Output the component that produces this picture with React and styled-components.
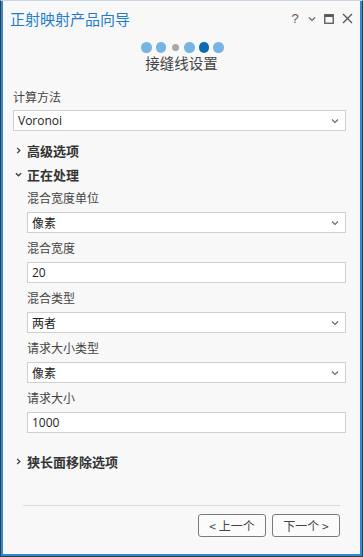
import React from 'react'
import styled, { createGlobalStyle } from 'styled-components'

const GlobalStyle = createGlobalStyle`
  html, body {
    margin: 0;
    padding: 0;
    background: #ffffff;
  }
  body {
    font-family: "Noto Sans", "Noto Sans CJK SC", sans-serif;
  }
`

const Frame = styled.div`
  box-sizing: border-box;
  width: 363px;
  height: 557px;
  border: 1px solid #3c3c3c;
  border-top-color: #c9d6e2;
`

const Window = styled.div`
  box-sizing: border-box;
  height: 100%;
  display: flex;
  flex-direction: column;
  background: #f8f8f8;
  border: 2px solid #2d8ad8;
  border-top: none;
`

const TitleBar = styled.div`
  height: 35px;
  display: flex;
  align-items: center;
  padding: 0 7px 0 7px;
`

const Title = styled.div`
  flex: 1;
  color: #1f7dcb;
  font-size: 15px;
  font-family: "Noto Sans CJK SC", sans-serif;
`

const WinButtons = styled.div`
  display: flex;
  align-items: center;
  gap: 8px;
  color: #555;
`

const Help = styled.span`
  font-family: "Liberation Sans", sans-serif;
  font-size: 13px;
  color: #555;
  width: 10px;
  text-align: center;
`

const Stepper = styled.div`
  display: flex;
  justify-content: center;
  align-items: center;
  gap: 4px;
  padding-top: 6px;
  height: 11px;
  padding-left: 2px;
`

const Dot = styled.span`
  width: ${p => (p.$small ? 7 : 10.5)}px;
  height: ${p => (p.$small ? 7 : 10.5)}px;
  margin: 0 ${p => (p.$small ? 1.5 : 0)}px;
  border-radius: 50%;
  background: ${p => (p.$active ? '#0b6cb4' : p.$small ? '#a8a8a8' : '#76b5e3')};
`

const Subtitle = styled.div`
  text-align: center;
  font-family: "Noto Sans CJK SC", sans-serif;
  font-size: 14.5px;
  line-height: 18px;
  color: #444;
  margin-top: 1px;
`

const Content = styled.div`
  padding: 17px 14px 0 10px;
`

const Group = styled.div`
  margin-left: ${p => (p.$indent ? 14 : 0)}px;
  margin-bottom: 7px;
`

const Label = styled.div`
  font-family: "Noto Sans CJK SC", sans-serif;
  font-size: 12px;
  line-height: 16px;
  color: #444;
  margin-bottom: ${p => (p.$tight ? 5 : 6)}px;
`

const Field = styled.div`
  box-sizing: border-box;
  height: 21px;
  display: flex;
  align-items: center;
  justify-content: space-between;
  padding: 0 6px 0 4px;
  background: #ffffff;
  border: 1px solid #cfcfcf;
  font-family: "Open Sans", "Noto Sans CJK SC", sans-serif;
  font-size: 12px;
  color: #222;
`

const Expander = styled.div`
  height: 24px;
  display: flex;
  align-items: center;
  gap: 5px;
  padding-left: 2px;
  margin-top: ${p => p.$top || 0}px;
  font-family: "Noto Sans CJK SC", sans-serif;
  font-weight: 700;
  font-size: 13px;
  color: #333;
`

const Spacer = styled.div`
  height: ${p => p.$h}px;
`

const Footer = styled.div`
  margin-top: auto;
  padding: 0 20px 17px 20px;
`

const Divider = styled.div`
  height: 1px;
  background: #dadada;
  margin-bottom: 8px;
`

const ButtonRow = styled.div`
  display: flex;
  justify-content: flex-end;
  gap: 6px;
`

const NavButton = styled.button`
  box-sizing: border-box;
  width: 68px;
  height: 23px;
  padding: 0;
  border: 1px solid #7a7a7a;
  border-radius: 3px;
  background: #fbfbfb;
  color: #444;
  font-family: "Noto Sans CJK SC", sans-serif;
  font-size: 12px;
`

const Chevron = ({ dir = 'down', size = 8, color = '#555', width = 1.3 }) => (
  <svg width={size} height={size} viewBox="0 0 8 8">
    {dir === 'down' ? (
      <path d="M1 2.5 L4 5.5 L7 2.5" fill="none" stroke={color} strokeWidth={width} />
    ) : (
      <path d="M2.5 1 L5.5 4 L2.5 7" fill="none" stroke={color} strokeWidth={width} />
    )}
  </svg>
)

const Select = ({ value }) => (
  <Field>
    <span>{value}</span>
    <Chevron size={8} color="#666" width={1.1} />
  </Field>
)

const FormGroup = ({ label, indent, tight, children }) => (
  <Group $indent={indent}>
    <Label $tight={tight}>{label}</Label>
    {children}
  </Group>
)

export default function App() {
  return (
    <>
      <GlobalStyle />
      <Frame>
        <Window>
          <TitleBar>
            <Title>正射映射产品向导</Title>
            <WinButtons>
              <Help>?</Help>
              <Chevron size={8} color="#666" width={1.2} />
              <svg width="10" height="10" viewBox="0 0 10 10">
                <rect x="0.75" y="0.75" width="8.5" height="8.5" fill="none" stroke="#555" strokeWidth="1.3" />
                <rect x="0.75" y="0.75" width="8.5" height="2.2" fill="#555" />
              </svg>
              <svg width="11" height="11" viewBox="0 0 11 11">
                <path d="M1 1 L10 10 M10 1 L1 10" stroke="#555" strokeWidth="1.3" />
              </svg>
            </WinButtons>
          </TitleBar>

          <Stepper>
            <Dot />
            <Dot />
            <Dot $small />
            <Dot />
            <Dot $active />
            <Dot />
          </Stepper>
          <Subtitle>接缝线设置</Subtitle>

          <Content>
            <FormGroup tight label="计算方法">
              <Select value="Voronoi" />
            </FormGroup>

            <Expander>
              <Chevron dir="right" size={7} color="#444" width={1.6} />
              高级选项
            </Expander>
            <Expander>
              <Chevron dir="down" size={7} color="#444" width={1.6} />
              正在处理
            </Expander>

            <Spacer $h={4} />
            <FormGroup indent label="混合宽度单位">
              <Select value="像素" />
            </FormGroup>
            <FormGroup indent label="混合宽度">
              <Field>20</Field>
            </FormGroup>
            <FormGroup indent label="混合类型">
              <Select value="两者" />
            </FormGroup>
            <FormGroup indent label="请求大小类型">
              <Select value="像素" />
            </FormGroup>
            <FormGroup indent label="请求大小">
              <Field>1000</Field>
            </FormGroup>

            <Expander $top={16}>
              <Chevron dir="right" size={7} color="#444" width={1.6} />
              狭长面移除选项
            </Expander>
          </Content>

          <Footer>
            <Divider />
            <ButtonRow>
              <NavButton>&lt; 上一个</NavButton>
              <NavButton>下一个 &gt;</NavButton>
            </ButtonRow>
          </Footer>
        </Window>
      </Frame>
    </>
  )
}
